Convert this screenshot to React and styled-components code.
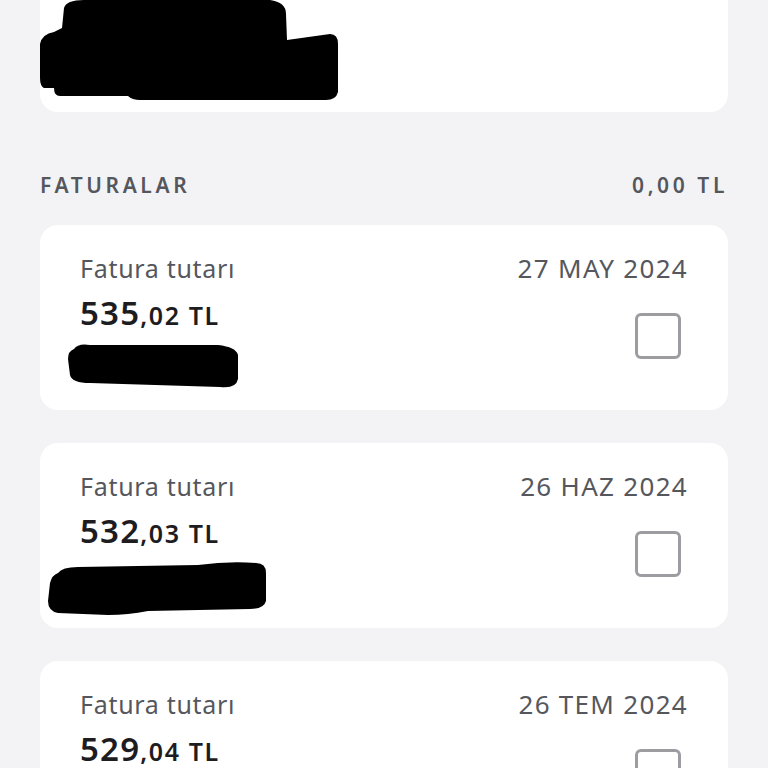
import styled, { createGlobalStyle } from 'styled-components'

const GlobalStyle = createGlobalStyle`
  * { box-sizing: border-box; }
  body {
    margin: 0;
    background: #f3f3f6;
    font-family: 'Noto Sans', Lato, sans-serif;
    -webkit-font-smoothing: antialiased;
  }
`

const invoices = [
  { whole: '535', cents: ',02 TL', date: '27 MAY 2024', blob: 'a' },
  { whole: '532', cents: ',03 TL', date: '26 HAZ 2024', blob: 'b' },
  { whole: '529', cents: ',04 TL', date: '26 TEM 2024', blob: null },
]

const Scribble = ({ kind }) => {
  if (kind === 'top') {
    return (
      <TopScribble width='300' height='100' viewBox='0 0 300 100'>
        <path
          d='M24 8 Q26 0 44 0 L230 0 Q246 2 246 14 L247 40 L290 34 Q298 34 298 44 L298 92 Q296 100 286 100 L100 100 Q92 100 88 96 L20 96 Q14 96 14 88 L4 88 Q0 86 0 78 L0 44 Q2 34 14 32 L22 28 Z'
          fill='#000'
        />
      </TopScribble>
    )
  }
  if (kind === 'a') {
    return (
      <RowScribble $left={-12} width='172' height='46' viewBox='0 0 172 46'>
        <path
          d='M6 6 Q10 0 22 2 L150 2 Q168 4 170 12 L170 36 Q168 46 152 44 L22 40 Q4 40 2 32 L0 16 Q0 8 6 6 Z'
          fill='#000'
        />
      </RowScribble>
    )
  }
  if (kind === 'b') {
    return (
      <RowScribble $left={-32} width='220' height='56' viewBox='0 0 220 56'>
        <path
          d='M10 12 Q14 6 30 6 L150 4 Q180 0 208 2 Q218 2 218 12 L218 40 Q216 48 202 48 L100 50 Q80 54 60 54 L10 52 Q0 50 0 40 L2 22 Q4 14 10 12 Z'
          fill='#000'
        />
      </RowScribble>
    )
  }
  return null
}

const App = () => {
  return (
    <>
      <GlobalStyle />
      <Page>
        <TopCard>
          <Scribble kind='top' />
        </TopCard>
        <SectionHeader>
          <span>FATURALAR</span>
          <span>0,00 TL</span>
        </SectionHeader>
        <List>
          {invoices.map((inv) => (
            <InvoiceCard key={inv.date}>
              <Left>
                <Label>Fatura tutarı</Label>
                <Amount>
                  {inv.whole}
                  <Cents>{inv.cents}</Cents>
                </Amount>
                <Scribble kind={inv.blob} />
              </Left>
              <Right>
                <DateText>{inv.date}</DateText>
                <Checkbox />
              </Right>
            </InvoiceCard>
          ))}
        </List>
      </Page>
    </>
  )
}

export default App

const Page = styled.div`
  padding: 0 40px;
  height: 768px;
  overflow: hidden;
`
const TopCard = styled.div`
  height: 112px;
  background: #fff;
  border-radius: 0 0 18px 18px;
  overflow: hidden;
`
const TopScribble = styled.svg`
  display: block;
`
const SectionHeader = styled.div`
  display: flex;
  justify-content: space-between;
  align-items: center;
  padding-top: 60px;
  height: 113px;
  padding-bottom: 27px;
  font-size: 21px;
  font-weight: 600;
  letter-spacing: 3.6px;
  color: #55575d;
`
const List = styled.div`
  display: flex;
  flex-direction: column;
  gap: 33px;
`
const InvoiceCard = styled.div`
  background: #fff;
  border-radius: 18px;
  height: 185px;
  padding: 28px 40px 0 40px;
  display: flex;
  justify-content: space-between;
  flex-shrink: 0;
`
const Left = styled.div`
  display: flex;
  flex-direction: column;
`
const Label = styled.div`
  font-size: 25px;
  line-height: 31px;
  color: #55575d;
  letter-spacing: 0.7px;
`
const Amount = styled.div`
  margin-top: 10px;
  font-size: 33px;
  line-height: 38px;
  font-weight: 600;
  color: #1d1d21;
  letter-spacing: 1.2px;
`
const Cents = styled.span`
  font-size: 25px;
  font-weight: 600;
  letter-spacing: 1.6px;
`
const RowScribble = styled.svg`
  display: block;
  margin-top: 9px;
  margin-left: ${({ $left }) => $left}px;
`
const Right = styled.div`
  display: flex;
  flex-direction: column;
  align-items: flex-end;
`
const DateText = styled.div`
  font-size: 26px;
  line-height: 31px;
  color: #55575d;
  letter-spacing: 1.3px;
`
const Checkbox = styled.div`
  width: 46px;
  height: 46px;
  margin-top: 29px;
  margin-right: 7px;
  border: 3px solid #9c9ca1;
  border-radius: 6px;
  background: #fff;
`
